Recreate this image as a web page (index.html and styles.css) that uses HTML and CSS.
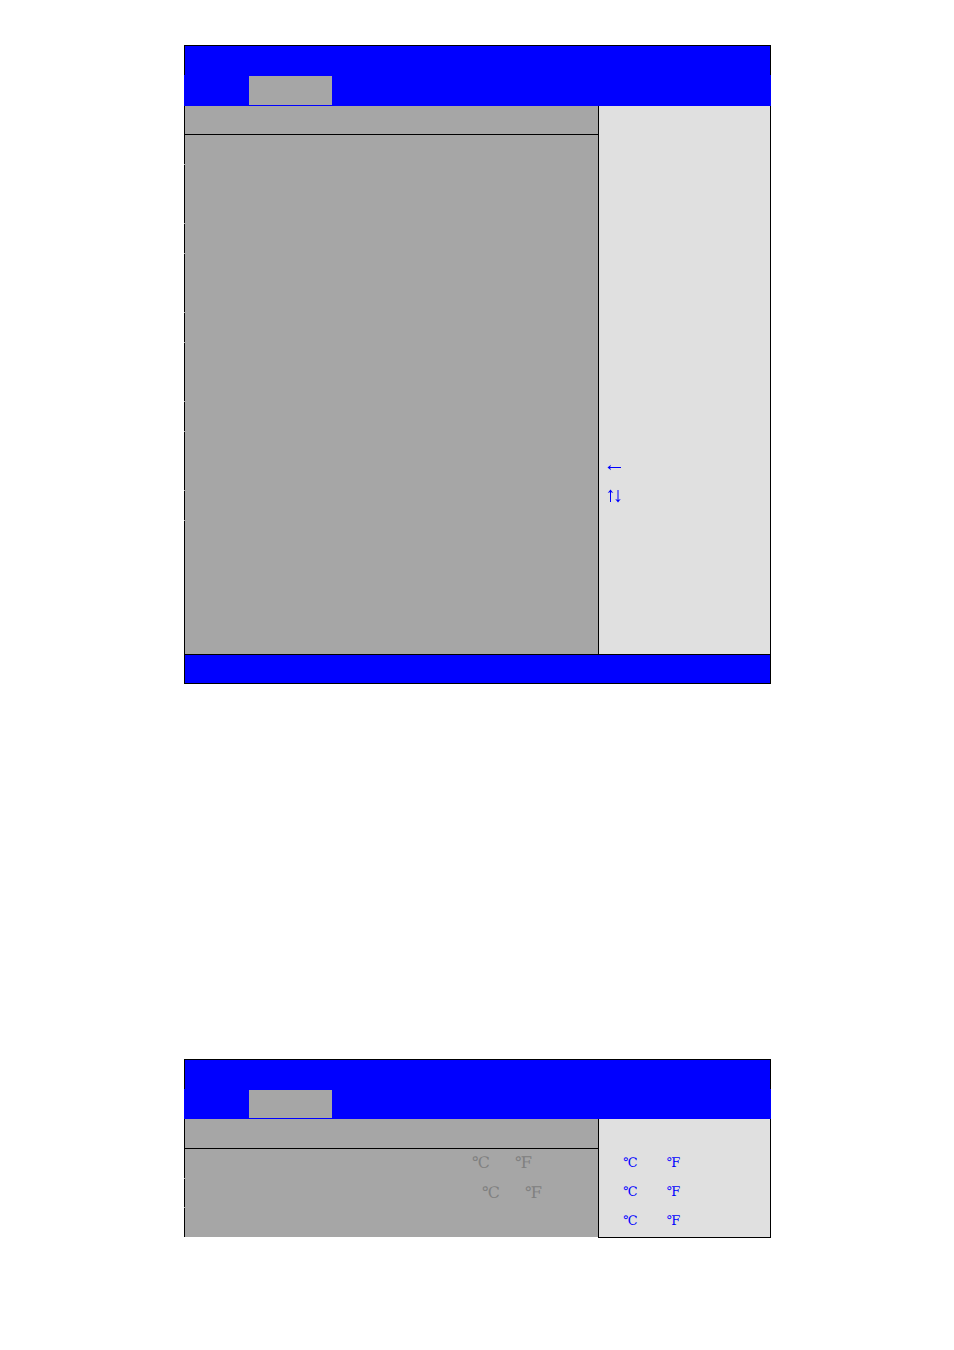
FILE: index.html
```html
<!DOCTYPE html>
<html lang="en">
<head>
<meta charset="utf-8">
<title>Setup utility</title>
<link rel="stylesheet" href="styles.css">
</head>
<body>
<main class="page">
  <section class="panel">
    <header class="title"></header>
    <nav class="tabs"><div class="tab"></div></nav>
    <div class="content">
      <div class="settings">
        <div class="heading"></div>
        <div class="row"></div>
        <div class="row double"></div>
        <div class="row"></div>
        <div class="row double"></div>
        <div class="row"></div>
        <div class="row double"></div>
        <div class="row"></div>
        <div class="row double"></div>
        <div class="row"></div>
        <div class="row rest"></div>
      </div>
      <aside class="help keys">
        <div class="key">
          <svg class="arrows" viewBox="0 0 16 16" role="img" aria-label="Left arrow">
            <path class="stem" d="M2 8.5H14"/>
            <path class="head" d="M0.5 8.5L4 5.7L3 8.5L4 11.3Z"/>
          </svg>
        </div>
        <div class="key">
          <svg class="arrows" viewBox="0 0 16 16" role="img" aria-label="Up and down arrows">
            <path class="stem" d="M3.5 3V14M11 2V13"/>
            <path class="head" d="M3.5 1.5L6.3 5L3.5 4L0.7 5ZM11 14.5L13.8 11L11 12L8.2 11Z"/>
          </svg>
        </div>
      </aside>
    </div>
    <footer class="footer"></footer>
  </section>

  <section class="panel">
    <header class="title"></header>
    <nav class="tabs short"><div class="tab"></div></nav>
    <div class="content">
      <div class="settings">
        <div class="heading tall"></div>
        <div class="row reading"><span>℃</span><span>℉</span></div>
        <div class="row compact reading indented"><span>℃</span><span>℉</span></div>
        <div class="row last"></div>
      </div>
      <aside class="help units">
        <div class="unit"><span>℃</span><span>℉</span></div>
        <div class="unit"><span>℃</span><span>℉</span></div>
        <div class="unit"><span>℃</span><span>℉</span></div>
      </aside>
    </div>
  </section>
</main>
</body>
</html>
```
FILE: styles.css
```css
* {
  box-sizing: border-box;
}

body {
  margin: 0;
  background: #fff;
  font-family: "Liberation Serif", "DejaVu Serif", serif;
  font-size: 16px;
}

.page {
  display: flex;
  flex-direction: column;
  gap: 375px;
  padding: 45px 183px 112px 184px;
}

.title {
  height: 30px;
  background: #00f;
  border: 1px solid #000;
  border-bottom: 0;
}

.tabs {
  height: 31px;
  padding: 1px 0 1px 65px;
  background: #00f;
}

.tabs.short {
  height: 30px;
}

.tab {
  width: 83px;
  height: 100%;
  background: #a6a6a6;
}

.content {
  display: grid;
  grid-template-columns: 414fr 173fr;
}

.settings {
  background: #a6a6a6;
}

.heading {
  height: 29px;
  border-left: 1px solid #000;
  border-bottom: 1px solid #000;
}

.heading.tall {
  height: 30px;
}

.row {
  height: 29px;
  margin-bottom: 1px;
  border-left: 1px solid #000;
}

.row.double {
  height: 58px;
}

.row.compact {
  height: 28px;
}

.row.rest {
  height: 133px;
  margin-bottom: 0;
}

.row.last {
  height: 29px;
  margin-bottom: 0;
}

.reading {
  display: flex;
  align-items: center;
  gap: 25px;
  padding-bottom: 2px;
  padding-left: 287px;
  color: #808080;
  font-size: 16px;
}

.reading.indented {
  padding-left: 297px;
}

.help {
  background: #e0e0e0;
  border-left: 1px solid #000;
  border-right: 1px solid #000;
  color: #00f;
}

.keys {
  padding: 346px 8px 0;
}

.key {
  display: flex;
  align-items: center;
  height: 29px;
}

.arrows {
  width: 16px;
  height: 16px;
}

.stem {
  fill: none;
  stroke: currentColor;
  stroke-width: 1;
}

.head {
  fill: currentColor;
}

.units {
  margin-bottom: -1px;
  padding: 29px 24px 0;
  border-bottom: 1px solid #000;
}

.unit {
  display: flex;
  gap: 29px;
  font-size: 13px;
  line-height: 29px;
}

.footer {
  height: 30px;
  background: #00f;
  border: 1px solid #000;
}
```
